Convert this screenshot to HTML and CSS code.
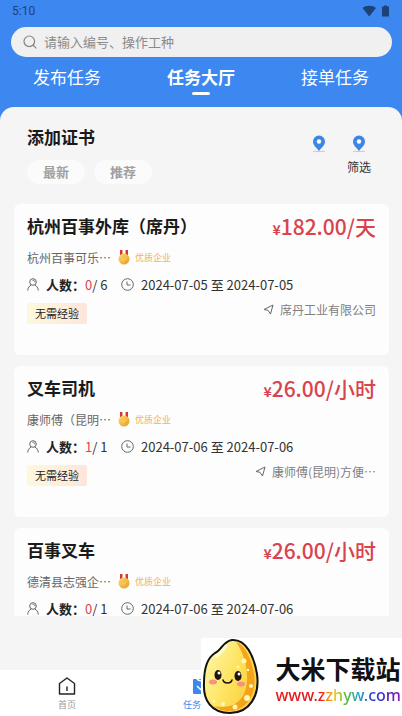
FILE: index.html
```html
<!DOCTYPE html>
<html lang="zh-CN">
<head>
<meta charset="utf-8">
<meta name="viewport" content="width=device-width, initial-scale=1">
<title>任务大厅</title>
<link rel="stylesheet" href="styles.css">
</head>
<body>
<svg class="defs" aria-hidden="true">
  <defs>
    <linearGradient id="gold" x1="0" y1="0" x2="1" y2="1"><stop offset="0" stop-color="#fbdc72"/><stop offset="1" stop-color="#e99a25"/></linearGradient>
    <linearGradient id="rice" x1="0" y1="0.2" x2="1" y2="0.8"><stop offset="0" stop-color="#fff6a8"/><stop offset="0.55" stop-color="#fde25a"/><stop offset="1" stop-color="#fbc93a"/></linearGradient>
    <symbol id="pin" viewBox="0 0 14 18">
      <path d="M1 16.5h12" stroke="#f3bccb" stroke-width="1.2"/>
      <path d="M7 0.5a6 6 0 0 0-6 6c0 4 4 6.500 6 9.500 2-3 6-5.500 6-9.500a6 6 0 0 0-6-6z" fill="#3b86e6"/>
      <circle cx="7" cy="6.500" r="2.200" fill="#fff"/>
    </symbol>
    <symbol id="medal" viewBox="0 0 12 15">
      <path d="M2 0h3v5H2zM7 0h3v5H7z" fill="#cf3b30"/>
      <path d="M4 0h1v5H4zM7 0h1v5H7z" fill="#f0a08c"/>
      <circle cx="6" cy="9" r="5.500" fill="url(#gold)"/>
      <path d="M4 9l1.500 1.500 2.500-3" fill="none" stroke="#f9d77c" stroke-width="1"/>
    </symbol>
    <symbol id="person" viewBox="0 0 12 13">
      <g fill="none" stroke="#666" stroke-width="1"><circle cx="6" cy="4" r="3.300"/><path d="M0.700 12.500c.2-2.800 1.600-4.600 3.500-5.400M11.300 12.500c-.2-2.800-1.600-4.600-3.500-5.400M5.500 2.300c1.500-.1 2.300.6 2.400 2"/></g>
    </symbol>
    <symbol id="clock" viewBox="0 0 13 13">
      <g fill="none" stroke="#666" stroke-width="1"><circle cx="6.500" cy="6.500" r="5.800"/><path d="M6 3.500v3.500h3.500"/></g>
    </symbol>
    <symbol id="send" viewBox="0 0 11 11">
      <path d="M10 1L1 5.500l4 .8L7.500 10z" fill="none" stroke="#666" stroke-width="1" stroke-linejoin="round"/>
    </symbol>
  </defs>
</svg>
<div class="app">
  <header class="header">
    <div class="status">
      <span>5:10</span>
      <svg width="28" height="12" viewBox="0 0 28 12" fill="#1c4278" aria-hidden="true"><path d="M0.500 3C4 0 10.500 0 14 3L7.200 11.500z"/><path d="M22 1.500V0.500h3v1h2V11.500h-7v-10z"/></svg>
    </div>
    <label class="search">
      <svg width="14" height="14" viewBox="0 0 14 14" fill="none" stroke="#858585" stroke-width="1.200" aria-hidden="true"><circle cx="6.300" cy="6.300" r="5.300"/><path d="M10 10l3.300 3.300"/></svg>
      <input type="search" placeholder="请输入编号、操作工种" aria-label="请输入编号、操作工种">
    </label>
    <nav class="tabs">
      <button type="button">发布任务</button>
      <button type="button" class="active">任务大厅</button>
      <button type="button">接单任务</button>
    </nav>
  </header>
  <main class="panel">
    <section class="toolbar">
      <div>
        <h1>添加证书</h1>
        <div class="pills"><button type="button">最新</button><button type="button">推荐</button></div>
      </div>
      <div class="filters">
        <button type="button" aria-label="添加证书"><svg width="14" height="18"><use href="#pin"/></svg></button>
        <button type="button"><svg width="14" height="18" aria-hidden="true"><use href="#pin"/></svg>筛选</button>
      </div>
    </section>
    <section class="list">
      <article class="card">
        <div class="row head"><h2>杭州百事外库（席丹）</h2><p class="price"><small>¥</small>182.00/天</p></div>
        <div class="row company"><span class="name">杭州百事可乐…</span><svg width="12" height="15" aria-hidden="true"><use href="#medal"/></svg><span class="quality">优质企业</span></div>
        <div class="row meta"><svg width="12" height="13" aria-hidden="true"><use href="#person"/></svg><span class="count"><b>人数：</b><em>0</em>/ 6</span><svg width="13" height="13" aria-hidden="true"><use href="#clock"/></svg><span>2024-07-05 至 2024-07-05</span></div>
        <div class="row foot"><span class="tag">无需经验</span><span class="place"><svg width="11" height="11" aria-hidden="true"><use href="#send"/></svg>席丹工业有限公司</span></div>
      </article>
      <article class="card">
        <div class="row head"><h2>叉车司机</h2><p class="price"><small>¥</small>26.00/小时</p></div>
        <div class="row company"><span class="name">康师傅（昆明…</span><svg width="12" height="15" aria-hidden="true"><use href="#medal"/></svg><span class="quality">优质企业</span></div>
        <div class="row meta"><svg width="12" height="13" aria-hidden="true"><use href="#person"/></svg><span class="count"><b>人数：</b><em>1</em>/ 1</span><svg width="13" height="13" aria-hidden="true"><use href="#clock"/></svg><span>2024-07-06 至 2024-07-06</span></div>
        <div class="row foot"><span class="tag">无需经验</span><span class="place"><svg width="11" height="11" aria-hidden="true"><use href="#send"/></svg>康师傅(昆明)方便…</span></div>
      </article>
      <article class="card">
        <div class="row head"><h2>百事叉车</h2><p class="price"><small>¥</small>26.00/小时</p></div>
        <div class="row company"><span class="name">德清县志强企…</span><svg width="12" height="15" aria-hidden="true"><use href="#medal"/></svg><span class="quality">优质企业</span></div>
        <div class="row meta"><svg width="12" height="13" aria-hidden="true"><use href="#person"/></svg><span class="count"><b>人数：</b><em>0</em>/ 1</span><svg width="13" height="13" aria-hidden="true"><use href="#clock"/></svg><span>2024-07-06 至 2024-07-06</span></div>
      </article>
    </section>
  </main>
  <nav class="bottom">
    <a href="#home"><svg width="18" height="18" viewBox="0 0 18 18" fill="none" stroke="#222" stroke-width="1.400" stroke-linejoin="round" aria-hidden="true"><path d="M1.500 6.500L9 1l7.500 5.500v10.500h-15zM9 9.500v4.500"/></svg>首页</a>
    <a href="#tasks" class="active"><svg width="18" height="18" viewBox="0 0 18 18" aria-hidden="true"><rect x="1" y="2" width="16" height="15" rx="1" fill="#3c87f0"/><path d="M5 1.500c1 3 7 3 8 0M5 9l3.500 3.500L13 7.500" fill="none" stroke="#fff" stroke-width="1.500"/></svg>任务大厅</a>
  </nav>
  <aside class="badge">
    <svg width="60" height="78" viewBox="0 0 60 78" aria-hidden="true">
      <path d="M31 2C45 1 53 18 56 36c3 21-7 39-27 39C10 75 2 62 3 45 3 31 6 20 14 15c7-3 8-12 17-13z" fill="url(#rice)" stroke="#111" stroke-width="2"/>
      <path d="M35 4c10 3 15 17 18 32 3 20-7 36-24 37-7 0-12-2-16-5 19 4 31-5 33-24 1-16-4-30-11-40z" fill="#f39a12" opacity=".85"/>
      <path d="M15 18c5-2 8-7 10-10" fill="none" stroke="#fffbd0" stroke-width="3" stroke-linecap="round"/>
      <g fill="#fff6b8"><circle cx="43" cy="23" r="2.500"/><circle cx="37" cy="29" r="1.500"/><circle cx="47" cy="32" r="1.300"/><circle cx="50" cy="48" r="2"/><circle cx="46" cy="60" r="3"/><circle cx="34" cy="69" r="2.500"/><circle cx="22" cy="66" r="2"/><circle cx="13" cy="63" r="1.500"/></g>
      <g fill="#20110c"><ellipse cx="17" cy="37" rx="3.500" ry="5"/><ellipse cx="37" cy="38" rx="3.500" ry="5"/></g>
      <g fill="#fff"><circle cx="18" cy="35" r="1.500"/><circle cx="38" cy="36" r="1.500"/></g>
      <g fill="#f8917e"><ellipse cx="12" cy="44" rx="4" ry="2.500"/><ellipse cx="40" cy="46" rx="4" ry="2.500"/></g>
      <path d="M22 42c1 4 8 4 9 0" fill="none" stroke="#20110c" stroke-width="1.500" stroke-linecap="round"/>
    </svg>
    <div><strong>大米下载站</strong><span class="url">www.zzhyw.com</span></div>
  </aside>
</div>
</body>
</html>
```

FILE: styles.css
```css
* { box-sizing: border-box; }
body, h1, h2, p { margin: 0; }
body {
  font-family: "Noto Sans CJK SC", sans-serif;
  font-size: 13px;
  color: #333;
  background: #f5f5f5;
}
button {
  font: inherit;
  color: inherit;
  border: 0;
  padding: 0;
  background: none;
}
svg { flex: none; display: block; }
.defs { position: absolute; width: 0; height: 0; }

.app {
  position: relative;
  height: 100vh;
  display: flex;
  flex-direction: column;
  background: #3c87f0;
}
.status {
  display: flex;
  justify-content: space-between;
  align-items: center;
  height: 22px;
  padding: 0 12px;
  font-family: Roboto, sans-serif;
  font-size: 12px;
  color: #1c4278;
}
.search {
  display: flex;
  align-items: center;
  gap: 7px;
  height: 30px;
  margin: 5px 10px 0 11px;
  padding: 0 12px;
  border-radius: 15px;
  background: #f0f0f0;
}
.search input {
  flex: 1;
  min-width: 0;
  border: 0;
  padding: 0;
  background: none;
  outline: 0;
  font: inherit;
  line-height: 18px;
  color: #333;
}
.search input::placeholder { color: #8b8b8b; opacity: 1; }
.tabs {
  display: grid;
  grid-template-columns: repeat(3, 1fr);
  height: 50px;
  padding-top: 7px;
}
.tabs button {
  display: flex;
  flex-direction: column;
  align-items: center;
  gap: 2px;
  font-size: 17px;
  line-height: 26px;
  color: #fff;
}
.tabs .active { font-weight: 700; }
.tabs .active::after {
  content: "";
  width: 18px;
  height: 3px;
  border-radius: 2px;
  background: #fff;
}

.panel {
  flex: 1;
  min-height: 0;
  display: flex;
  flex-direction: column;
  padding: 0 13px 54px 14px;
  border-radius: 14px 14px 0 0;
  background: #f5f5f5;
}
.toolbar {
  display: flex;
  justify-content: space-between;
  padding: 17px 13px 20px;
}
h1 {
  font-size: 17px;
  line-height: 26px;
  font-weight: 700;
  color: #1a1a1a;
}
.pills { display: flex; gap: 9px; margin-top: 10px; }
.pills button {
  width: 58px;
  height: 24px;
  border-radius: 12px;
  background: #fbfbfb;
  font-weight: 700;
  line-height: 24px;
  color: #a0a0a0;
}
.filters { display: flex; align-items: flex-start; padding: 11px 11px 0 0; gap: 28px; }
.filters button {
  display: flex;
  flex-direction: column;
  align-items: center;
  gap: 5px;
  width: 12px;
  white-space: nowrap;
  font-size: 12px;
  line-height: 18px;
}

.list {
  flex: 1;
  min-height: 0;
  overflow: hidden;
  display: flex;
  flex-direction: column;
  gap: 11px;
}
.card {
  flex: none;
  display: flex;
  flex-direction: column;
  gap: 9px;
  min-height: 151px;
  padding: 10px 13px;
  border-radius: 6px;
  background: #fdfdfd;
}
.row { display: flex; align-items: center; white-space: nowrap; }
.head { height: 26px; justify-content: space-between; }
h2 { font-size: 17px; line-height: 24px; font-weight: 700; color: #1a1a1a; }
.head { align-items: flex-start; }
.price { font-size: 21px; line-height: 24px; font-weight: 500; color: #d9434e; }
.price small { font-size: 14px; font-weight: 700; }
.company { height: 16px; font-size: 12px; color: #666; }
.name { width: 91px; }
.quality { margin-left: 5px; font-size: 9px; color: #eeb067; }
.meta { height: 20px; gap: 7px; }
.count { width: 68px; }
.count b { color: #222; }
.count em { font-style: normal; color: #d9434e; }
.foot { height: 21px; justify-content: space-between; }
.tag {
  padding: 0 8px;
  font-size: 11px;
  line-height: 21px;
  color: #222;
  border-radius: 2px;
  background: linear-gradient(90deg, #fdf8dc, #fde6dc);
}
.place {
  display: flex;
  align-items: center;
  align-self: flex-start;
  gap: 6px;
  height: 12px;
  font-size: 12px;
  color: #808080;
}

.bottom {
  display: grid;
  grid-template-columns: repeat(3, 1fr);
  height: 46px;
  background: #fff;
}
.bottom a {
  display: flex;
  flex-direction: column;
  align-items: center;
  gap: 3px;
  padding-top: 7px;
  font-size: 9px;
  line-height: 14px;
  color: #999;
  text-decoration: none;
}
.bottom .active { color: #3c87f0; }

.badge {
  position: absolute;
  right: 0;
  bottom: 0;
  display: flex;
  align-items: center;
  gap: 14px;
  height: 78px;
  padding-right: 1px;
  background: #fff;
}
.badge strong {
  display: block;
  margin-top: 3px;
  font-size: 25px;
  line-height: 32px;
  color: #111;
}
.url {
  display: block;
  font-family: "Noto Sans", sans-serif;
  font-size: 16px;
  font-weight: 500;
  line-height: 22px;
  color: transparent;
  background: linear-gradient(90deg, #e61717 0 36%, #f08a1c 42%, #e8c81c 48%, #58b82c 56%, #2aa8c8 66%, #2440d0 76%, #4a20c8 88%, #8a1ca8);
  -webkit-background-clip: text;
  background-clip: text;
}
```
